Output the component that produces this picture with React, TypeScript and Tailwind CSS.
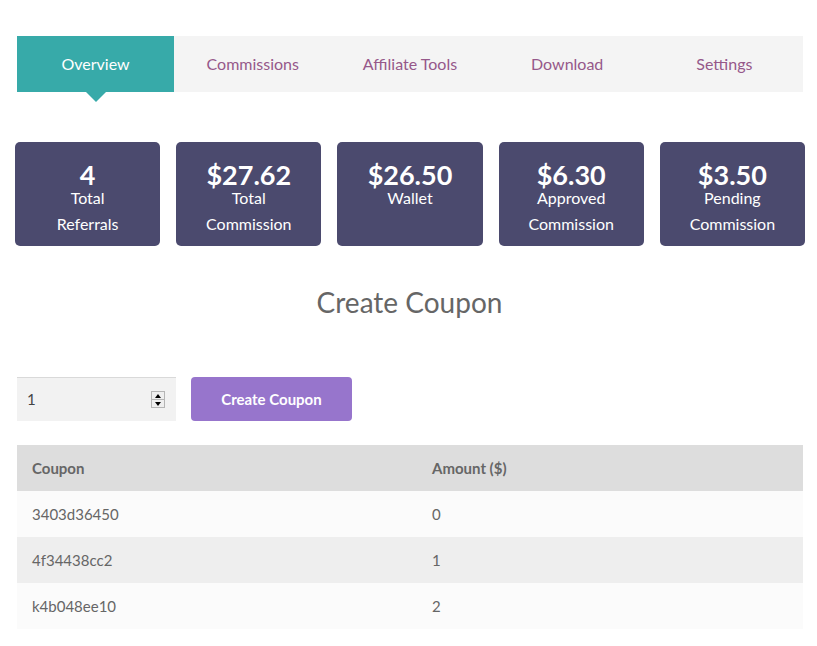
import React from 'react';

const TABS = ['Overview', 'Commissions', 'Affiliate Tools', 'Download', 'Settings'];

const STATS = [
  { value: '4', lines: ['Total', 'Referrals'] },
  { value: '$27.62', lines: ['Total', 'Commission'] },
  { value: '$26.50', lines: ['Wallet'] },
  { value: '$6.30', lines: ['Approved', 'Commission'] },
  { value: '$3.50', lines: ['Pending', 'Commission'] },
];

const COUPONS = [
  { code: '3403d36450', amount: '0' },
  { code: '4f34438cc2', amount: '1' },
  { code: 'k4b048ee10', amount: '2' },
];

export default function App() {
  return (
    <div className="min-h-screen bg-white font-['Lato','Noto_Sans',sans-serif] pt-[36px]">
      {/* Tabs */}
      <div className="ml-[17px] w-[786px] grid grid-cols-5 bg-[#f4f4f4] h-[56px]">
        {TABS.map((tab, i) => (
          <div
            key={tab}
            className={`relative flex items-center justify-center text-[16px] ${
              i === 0 ? 'bg-[#37aaa9] text-white' : 'text-[#96588a]'
            }`}
          >
            {tab}
            {i === 0 && (
              <span className="absolute left-1/2 top-full -translate-x-1/2 w-0 h-0 border-l-[10px] border-r-[10px] border-t-[10px] border-l-transparent border-r-transparent border-t-[#37aaa9]" />
            )}
          </div>
        ))}
      </div>

      {/* Stat cards */}
      <div className="ml-[15px] w-[790px] mt-[50px] grid grid-cols-5 gap-4">
        {STATS.map((s) => (
          <div key={s.value} className="h-[104px] rounded-[5px] bg-[#4b4a6e] text-white text-center pt-[21px]">
            <div className="text-[27px] font-bold leading-[24px]">{s.value}</div>
            {s.lines.map((l, j) => (
              <div key={l} className={`text-[16px] ${j === 0 ? 'leading-[22px]' : 'leading-[26px] mt-[2px]'}`}>
                {l}
              </div>
            ))}
          </div>
        ))}
      </div>

      {/* Heading */}
      <h2 className="mt-[39px] text-center text-[28px] leading-[34px] text-[#666666] pl-[2px]">Create Coupon</h2>

      {/* Form */}
      <div className="ml-[17px] mt-[58px] flex items-center gap-[15px]">
        <div className="w-[159px] h-[44px] bg-[#f2f2f2] border-t border-[#d9d9d9] flex items-center justify-between pl-[10px] pr-[11px] text-[15px] text-[#444]">
          <span>1</span>
          <span className="flex flex-col w-[14px] h-[17px] border border-[#b5b5b5] bg-[#efefef]">
            <span className="flex-1 flex items-center justify-center border-b border-[#b5b5b5]">
              <span className="w-0 h-0 border-l-[3px] border-r-[3px] border-b-[4px] border-l-transparent border-r-transparent border-b-black" />
            </span>
            <span className="flex-1 flex items-center justify-center">
              <span className="w-0 h-0 border-l-[3px] border-r-[3px] border-t-[4px] border-l-transparent border-r-transparent border-t-black" />
            </span>
          </span>
        </div>
        <button className="w-[161px] h-[44px] rounded-[4px] bg-[#9775cc] text-white text-[15px] font-bold">
          Create Coupon
        </button>
      </div>

      {/* Table */}
      <div className="ml-[17px] w-[786px] mt-[24px] text-[15px] text-[#666666]">
        <div className="flex h-[46px] items-center bg-[#dddddd] font-bold">
          <div className="w-[400px] pl-[15px]">Coupon</div>
          <div className="pl-[15px]">Amount ($)</div>
        </div>
        {COUPONS.map((c, i) => (
          <div key={c.code} className={`flex h-[46px] items-center ${i % 2 === 1 ? 'bg-[#eeeeee]' : 'bg-[#fbfbfb]'}`}>
            <div className="w-[400px] pl-[15px]">{c.code}</div>
            <div className="pl-[15px]">{c.amount}</div>
          </div>
        ))}
      </div>
    </div>
  );
}
